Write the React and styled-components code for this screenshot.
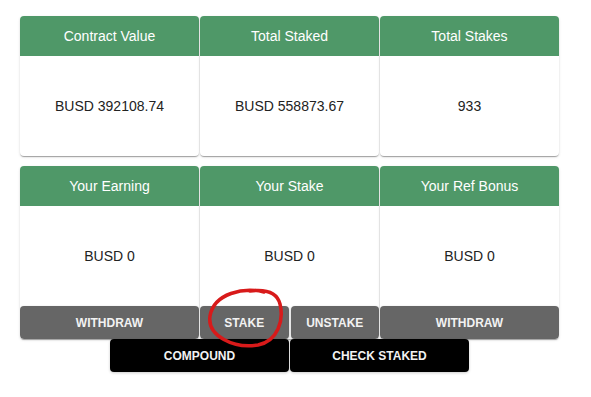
import React from 'react';
import styled, { createGlobalStyle } from 'styled-components';

const GlobalStyle = createGlobalStyle`
  body {
    margin: 0;
    background: #fff;
    font-family: "Liberation Sans", Arial, sans-serif;
  }
`;

const Page = styled.div`
  position: relative;
  padding: 16px 20px;
  display: flex;
  flex-direction: column;
  gap: 10px;
`;

const Row = styled.div`
  display: grid;
  grid-template-columns: repeat(3, 179px);
  column-gap: 1px;
`;

const Card = styled.div`
  display: flex;
  flex-direction: column;
  background: #fff;
  border-radius: 4px;
  box-shadow: 0 2px 1px -1px rgba(0, 0, 0, 0.2), 0 1px 1px 0 rgba(0, 0, 0, 0.14),
    0 1px 3px 0 rgba(0, 0, 0, 0.12);
  overflow: hidden;
`;

const Header = styled.div`
  height: 40px;
  background: #4f9868;
  color: #fff;
  font-size: 14px;
  display: flex;
  align-items: center;
  justify-content: center;
`;

const Body = styled.div`
  height: 100px;
  display: flex;
  align-items: center;
  justify-content: center;
  font-size: 14px;
  color: #222;
`;

const Actions = styled.div`
  display: flex;
  gap: 2px;
`;

const Button = styled.button`
  flex: 1;
  height: 33px;
  border: none;
  border-radius: 4px;
  background: ${(p) => (p.dark ? '#000' : '#666')};
  color: #f2f2f2;
  font-family: "Liberation Sans", Arial, sans-serif;
  font-weight: bold;
  font-size: 12px;
  text-transform: uppercase;
  cursor: pointer;
  padding: 0;
  box-shadow: 0 1px 3px rgba(0, 0, 0, 0.2);
`;

const BottomBar = styled.div`
  display: grid;
  grid-template-columns: repeat(2, 179px);
  column-gap: 1px;
  margin: -10px 0 0 90px;
`;

const Scribble = styled.svg`
  position: absolute;
  left: 200px;
  top: 284px;
  pointer-events: none;
`;

const top = [
  { title: 'Contract Value', value: 'BUSD 392108.74' },
  { title: 'Total Staked', value: 'BUSD 558873.67' },
  { title: 'Total Stakes', value: '933' },
];

const mine = [
  { title: 'Your Earning', value: 'BUSD 0', actions: ['Withdraw'] },
  { title: 'Your Stake', value: 'BUSD 0', actions: ['Stake', 'Unstake'] },
  { title: 'Your Ref Bonus', value: 'BUSD 0', actions: ['Withdraw'] },
];

export default function App() {
  return (
    <Page>
      <GlobalStyle />
      <Row>
        {top.map((c) => (
          <Card key={c.title}>
            <Header>{c.title}</Header>
            <Body>{c.value}</Body>
          </Card>
        ))}
      </Row>
      <Row>
        {mine.map((c) => (
          <Card key={c.title}>
            <Header>{c.title}</Header>
            <Body>{c.value}</Body>
            <Actions>
              {c.actions.map((a) => (
                <Button key={a}>{a}</Button>
              ))}
            </Actions>
          </Card>
        ))}
      </Row>
      <BottomBar>
        <Button dark>Compound</Button>
        <Button dark>Check Staked</Button>
      </BottomBar>
      <Scribble width="95" height="70" viewBox="0 0 95 70">
        <path
          d="M64 8 C44 3 14 9 10 32 C7 52 34 65 58 61 C78 57 84 36 80 20 C77 8 66 5 50 7"
          fill="none"
          stroke="#d81a1a"
          strokeWidth="3.5"
          strokeLinecap="round"
        />
      </Scribble>
    </Page>
  );
}
